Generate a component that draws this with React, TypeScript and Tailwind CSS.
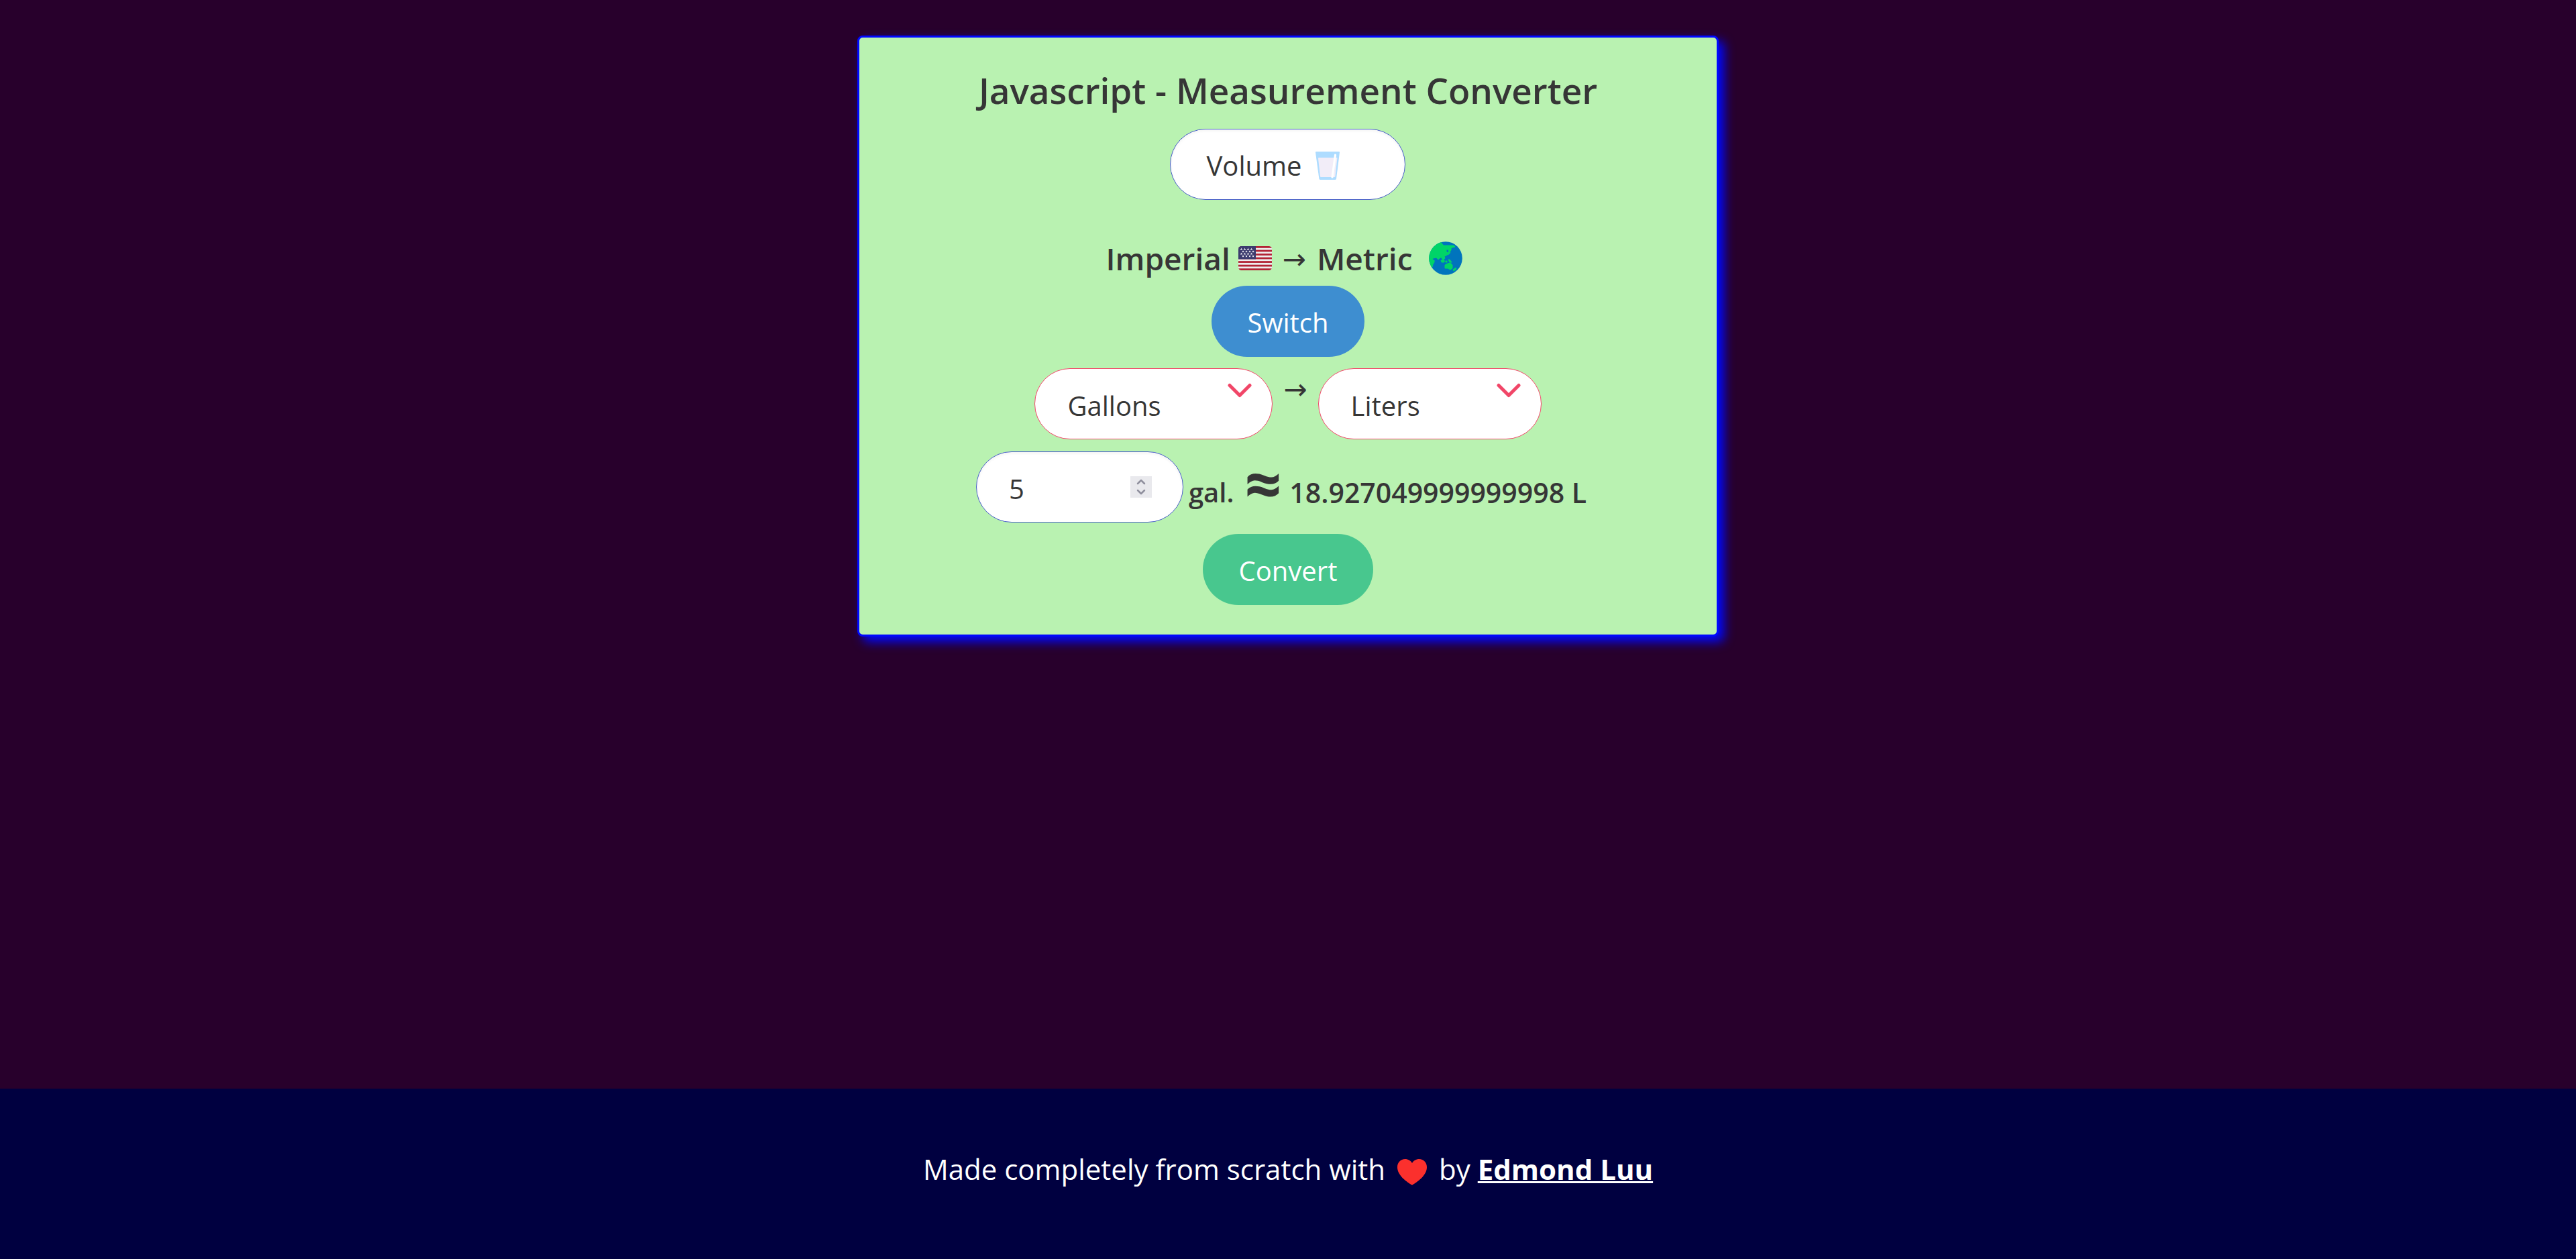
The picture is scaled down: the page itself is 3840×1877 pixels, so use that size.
import { useState } from "react";

function Glass() {
  return (
    <svg className="h-[42px] w-9" viewBox="0 0 36 42" aria-hidden="true">
      <path d="M1 0h34q1 0 1 1.2L31 40.6q-.2 1.4-1.400 1.4H6.800q-1.200 0-1.400-1.400L0 1.200Q0 0 1 0Z" fill="#aedcff" />
      <path d="M4 10q0-1 1-1h26.500q1 0 .9 1L29.400 37q-.1 1-1 1H8q-.9 0-1-1Z" fill="#f2edf8" />
      <path d="M29.500 5.200 25 38" stroke="#fff" strokeWidth="3.200" strokeLinecap="round" />
    </svg>
  );
}

const starRows = [4.500, 8, 11.500, 15];

function UsFlag() {
  return (
    <svg className="h-9 w-[50px]" viewBox="0 0 50 36" aria-hidden="true">
      <clipPath id="flag-shape">
        <rect width="50" height="36" rx="4.500" />
      </clipPath>
      <g clipPath="url(#flag-shape)">
        <rect width="50" height="36" fill="#eee" />
        {[0, 2, 4, 6, 8, 10, 12].map((i) => (
          <rect key={i} y={(i * 36) / 13} width="50" height={36 / 13} fill="#b22334" />
        ))}
        <rect width="26" height="19.400" fill="#3c3b6e" />
        {starRows.map((y, r) =>
          [0, 1, 2, 3].map((c) => (
            <path
              key={`${r}-${c}`}
              transform={`translate(${4.500 + c * 5 + (r % 2) * 2.500} ${y})`}
              d="M0-1.900.5-.6 1.900-.6.8.3 1.200 1.600 0 .8-1.200 1.600-.8.300-1.900-.6-.5-.6Z"
              fill="#fff"
            />
          )),
        )}
      </g>
    </svg>
  );
}

function Globe() {
  return (
    <svg className="size-[50px]" viewBox="0 0 50 50" aria-hidden="true">
      <clipPath id="globe-shape">
        <circle cx="25" cy="25" r="24.800" />
      </clipPath>
      <g clipPath="url(#globe-shape)">
        <rect width="50" height="50" fill="#0074bd" />
        <g fill="#00d468" stroke="#00d468" strokeWidth="1" strokeLinejoin="round">
          <path d="M0 0H17L20 4 22 6H37L39 8 35 9 33 10 33 13 30 17 29 12 26 12 26 15 28 17 26 21 23 22 24 25 21 28 19 24 17 24 14 27 11 24 6 25 5 27 8 28 8 31 6 34 5 38 0 38Z" />
          <path d="m27 19 2-3 3 0-2 3-3 1ZM18 28h5v3h-4ZM25 29h2v2h-2ZM29 27l2 0 3 4-3 0ZM24 35l4-2 3-1 2 1 2 2 0 5-3 2-4-2-4 0ZM40 39l1 2-4 3-1-2Z" />
        </g>
      </g>
    </svg>
  );
}

function Heart() {
  return (
    <svg className="mx-[18px] inline-block h-[39px] w-11" viewBox="0 0 44 39" aria-hidden="true">
      <path d="M22 39C15 34.500 0 25 0 12 0 5 5 0 11.500 0 16 0 20 2.500 22 6c2-3.500 6-6 10.500-6C39 0 44 5 44 12c0 13-15 22.500-22 27Z" fill="#fb302d" />
    </svg>
  );
}

function UnitSelect({ label, options, width }: { label: string; options: string[]; width: string }) {
  return (
    <div className="relative">
      <select
        aria-label={label}
        className={`${width} h-[106px] appearance-none rounded-full border border-[#f14668] bg-white pt-1.5 pl-12 text-[40px] text-[#363636]`}
      >
        {options.map((o) => (
          <option key={o}>{o}</option>
        ))}
      </select>
      <svg className="pointer-events-none absolute top-[22px] right-[31px] h-[22px] w-9" viewBox="0 0 36 22" fill="none" aria-hidden="true">
        <path d="M3 3.500 18 18.500 33 3.500" stroke="#f14668" strokeWidth="5" strokeLinecap="round" strokeLinejoin="round" />
      </svg>
    </div>
  );
}

const gallonToLiter = 3.7854099999999997;

export default function App() {
  const [amount, setAmount] = useState("5");
  const [result, setResult] = useState("18.927049999999998");

  return (
    <div className="flex min-h-screen flex-col bg-[#28002c] font-['Open_Sans',sans-serif] text-[#363636]">
      <main className="flex grow flex-col items-center pt-[53px]">
        <section className="box-content flex w-[calc(100%/3-2px)] min-w-[1100px] flex-col items-center rounded-[8px] border-[3px] border-[#0009ff] bg-[#b9f2b1] pt-[45px] pb-11 shadow-[8px_8px_16px_#0008ff]">
          <h1 className="text-[53px] leading-[68px] font-semibold">Javascript - Measurement Converter</h1>

          <button
            type="button"
            className="mt-[23px] flex h-[106px] w-[351px] items-center rounded-full border border-[#485fc7] bg-white pt-1 pl-[53px] text-[40px] shadow-[inset_0_2px_4px_rgba(10,10,10,0.05)]"
          >
            <span className="mr-5">Volume</span>
            <Glass />
          </button>

          <h2 className="mt-[55px] flex items-center pr-3 text-[46px] leading-[60px] font-semibold">
            <span>Imperial</span>
            <span className="mr-4 ml-3"><UsFlag /></span>
            <span className="pt-1 font-['DejaVu_Sans'] text-[42px] font-normal">→</span>
            <span className="mr-6 ml-4">Metric</span>
            <Globe />
          </h2>

          <button type="button" className="mt-[9px] h-[106px] w-[228px] rounded-full bg-[#3e8ed0] pt-1 text-[40px] text-white">
            Switch
          </button>

          <div className="mt-[17px] flex">
            <UnitSelect label="From unit" options={["Gallons", "Quarts", "Pints"]} width="w-[355px]" />
            <span className="mx-4 font-['DejaVu_Sans'] text-[42px] leading-[64px]">→</span>
            <UnitSelect label="To unit" options={["Liters", "Milliliters"]} width="w-[333px]" />
          </div>

          <div className="mt-[18px] flex items-center pr-5">
            <div className="relative">
              <input
                type="number"
                aria-label="Amount"
                value={amount}
                onChange={(e) => setAmount(e.target.value)}
                className="h-[106px] w-[309px] appearance-none rounded-full border border-[#485fc7] bg-white pt-1 pr-20 pl-12 text-[40px] shadow-[inset_0_2px_4px_rgba(10,10,10,0.05)] [&::-webkit-inner-spin-button]:appearance-none"
              />
              <svg className="pointer-events-none absolute top-[37px] right-[47px] size-8" viewBox="0 0 32 32" fill="none" aria-hidden="true">
                <rect width="32" height="32" fill="#e9e9ed" />
                <path d="m11 11 5-5 5 5M11 21l5 5 5-5" stroke="#8f8f9d" strokeWidth="2.500" strokeLinecap="round" strokeLinejoin="round" />
              </svg>
            </div>
            <p className="ml-2 flex items-center text-[40px] leading-[60px] font-semibold">
              <span className="pt-4">gal.</span>
              <span className="mr-3 ml-4 pb-3 text-[96px] leading-[60px] font-bold">≈</span>
              <span className="pt-4 text-[41px]">{result} L</span>
            </p>
          </div>

          <button
            type="button"
            onClick={() => setResult(String(Number(amount) * gallonToLiter))}
            className="mt-[17px] h-[106px] w-[254px] rounded-full bg-[#48c78e] pt-1 text-[40px] text-white"
          >
            Convert
          </button>
        </section>
      </main>

      <footer className="flex h-[254px] items-center justify-center bg-[#000040] pb-4 text-[42px] text-white">
        <p>
          Made completely from scratch with
          <Heart />
          by{" "}
          <a href="#" className="font-bold underline decoration-[3px]">
            Edmond Luu
          </a>
        </p>
      </footer>
    </div>
  );
}
